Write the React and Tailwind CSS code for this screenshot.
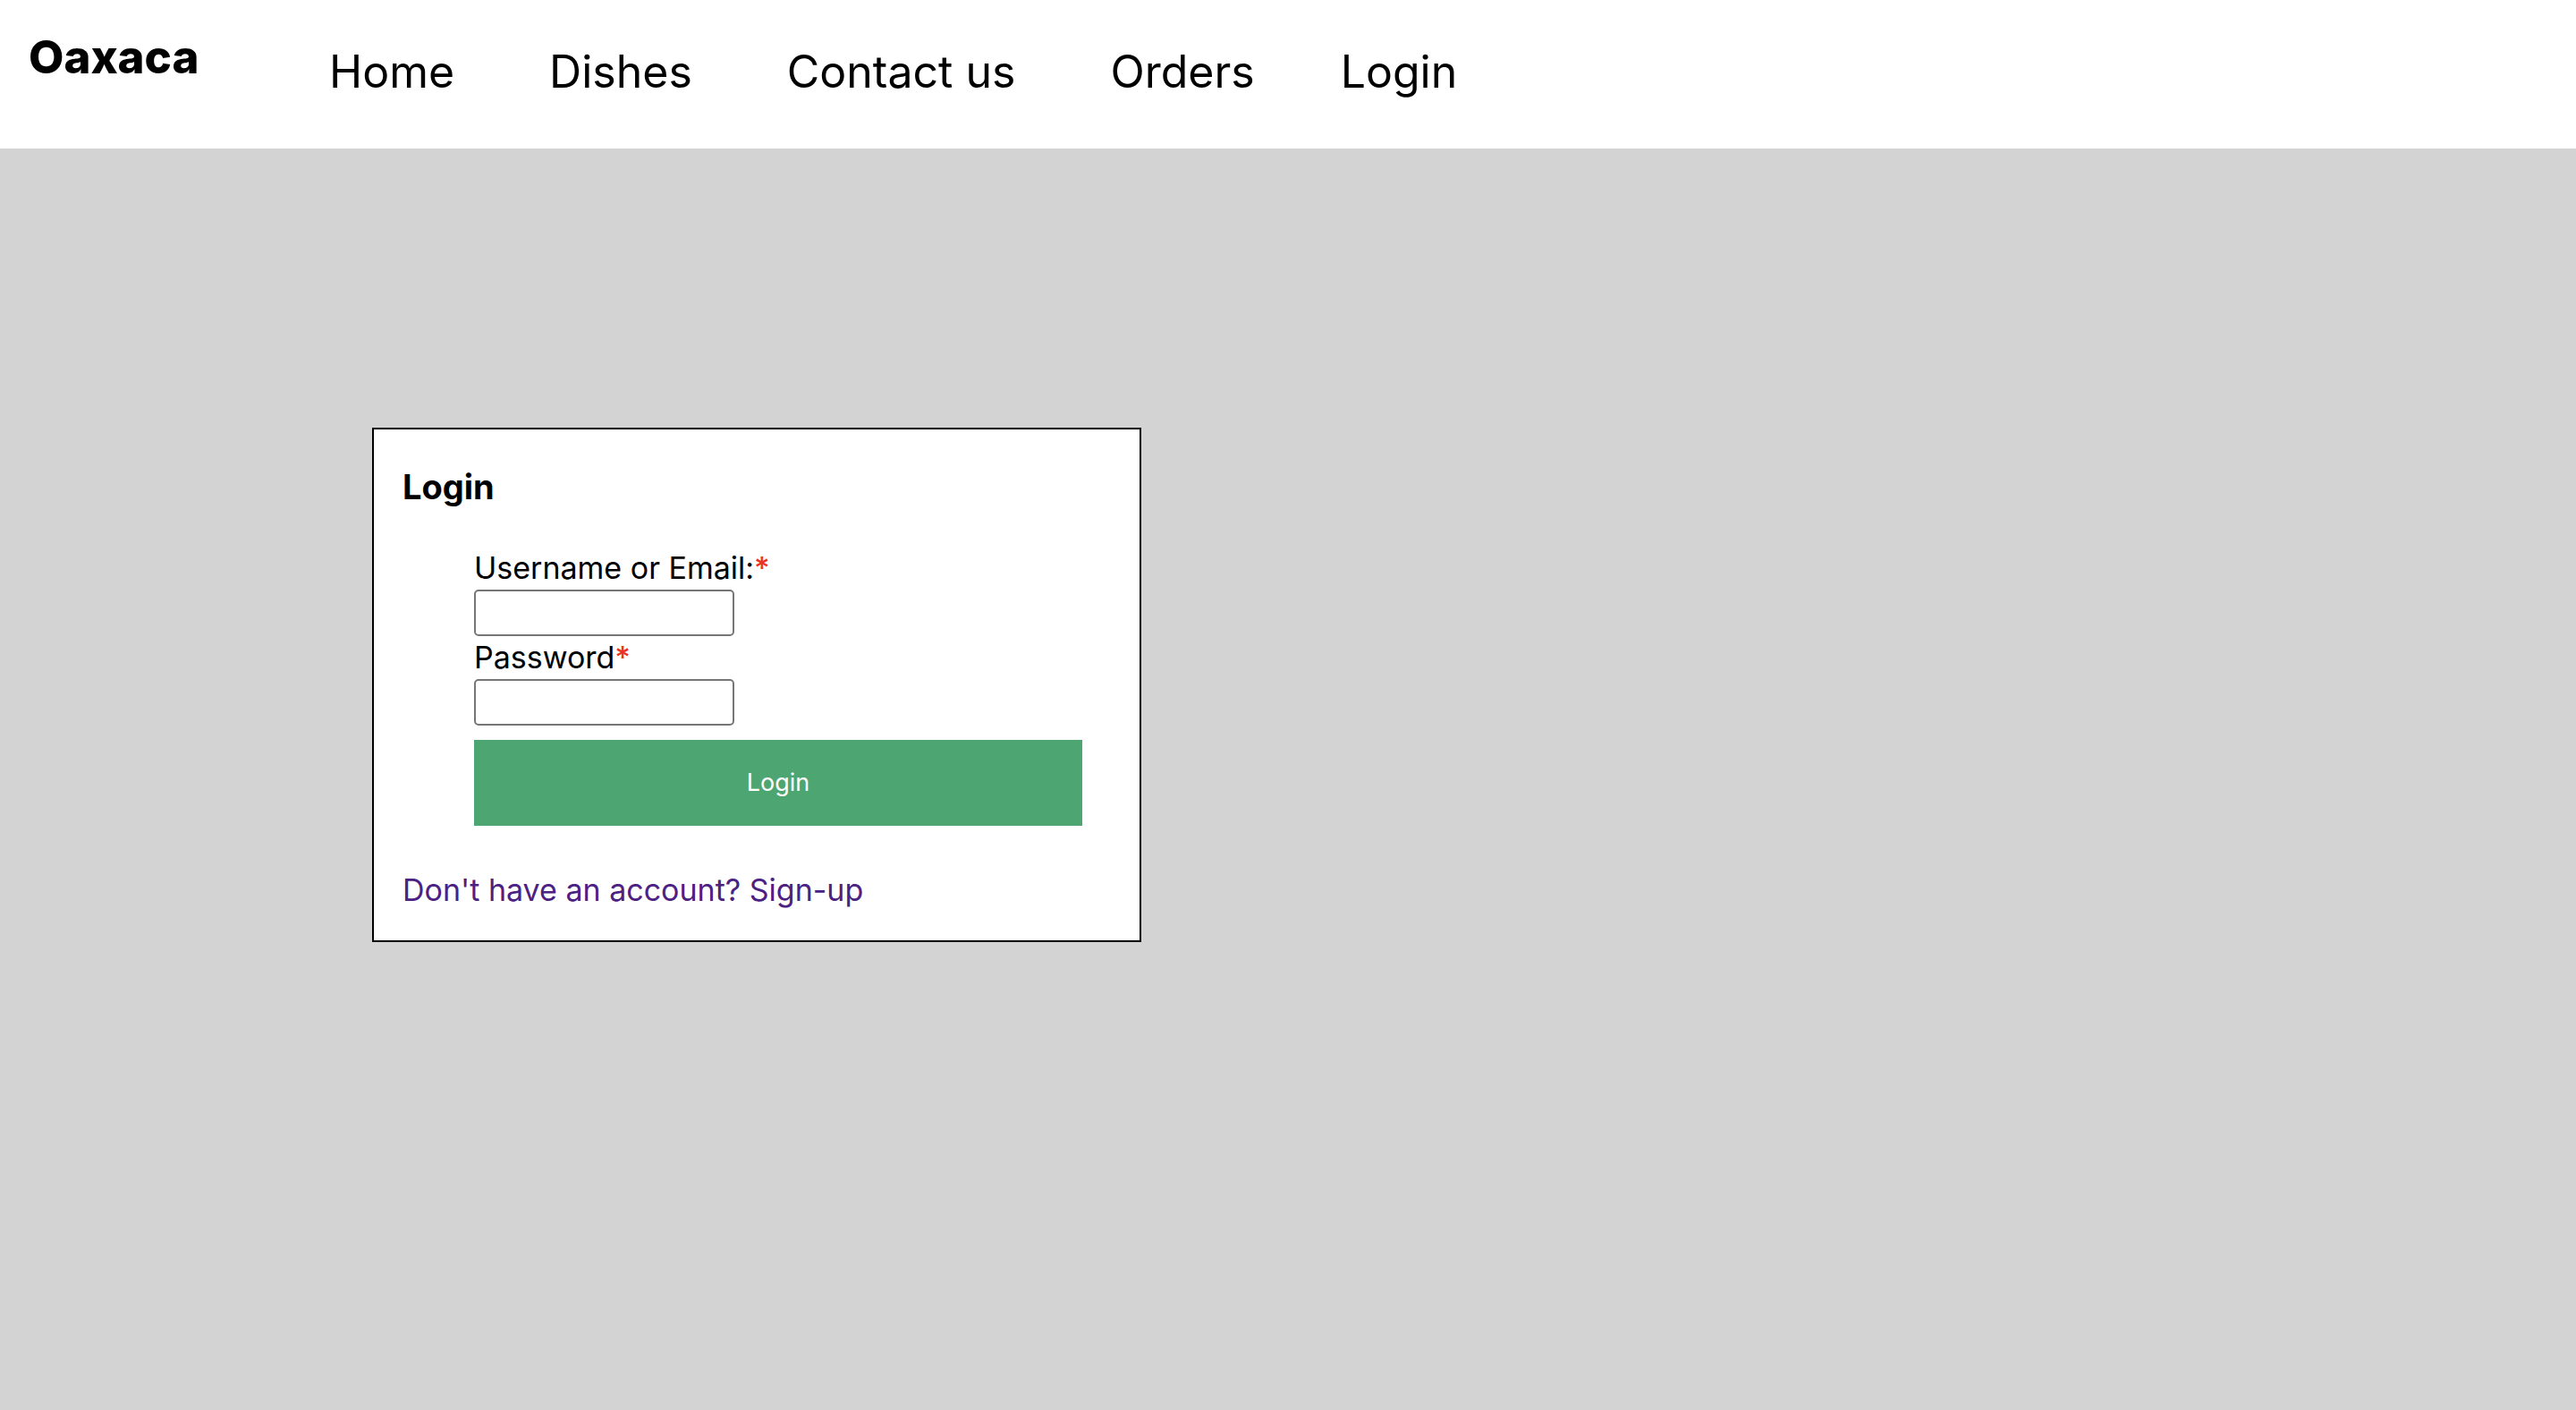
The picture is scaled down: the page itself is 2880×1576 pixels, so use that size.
import React from 'react';

const LINKS = ['Home', 'Dishes', 'Contact us', 'Orders'];

function Header() {
  return (
    <header className="flex items-start bg-white pl-8 text-black">
      <h1 className="w-84 shrink-0 pt-7 text-[51px] leading-[72px] font-extrabold">Oaxaca</h1>
      <nav className="flex gap-24 pt-11 pb-[50px] text-[50px] leading-[72px]">
        <ul className="flex gap-[106px]">
          {LINKS.map((label) => (
            <li key={label}>
              <a href="#" className="whitespace-nowrap">{label}</a>
            </li>
          ))}
        </ul>
        <a href="#">Login</a>
      </nav>
    </header>
  );
}

function Field({ id, label, type }) {
  return (
    <div className="flex flex-col items-start">
      <label htmlFor={id} className="text-[34px] leading-[48px]">
        {label}
        <span className="font-medium text-[#eb3323]">*</span>
      </label>
      <input
        id={id}
        type={type}
        required
        className="h-[52px] w-[291px] rounded-[5px] border-2 border-[#767676] bg-white px-1 text-[27px] shadow-none outline-none"
      />
    </div>
  );
}

function LoginCard() {
  return (
    <section className="w-full max-w-[860px] border-2 border-black bg-white px-8 pt-10 pb-8">
      <h2 className="text-[38px] leading-[48px] font-bold">Login</h2>
      <form className="mt-[43px] mr-8 ml-20">
        <Field id="username" label="Username or Email:" type="text" />
        <Field id="password" label="Password" type="password" />
        <button type="button" className="mt-4 h-24 w-full bg-[#4da571] text-[27px] text-white">
          Login
        </button>
      </form>
      <a href="#" className="mt-12 block text-[34px] leading-[48px] text-[#4b2183]">
        Don't have an account? Sign-up
      </a>
    </section>
  );
}

export default function App() {
  return (
    <div className="flex min-h-screen flex-col bg-[#d3d3d3] font-['Inter',sans-serif] text-black">
      <Header />
      <main className="pt-78 pl-104">
        <LoginCard />
      </main>
    </div>
  );
}
